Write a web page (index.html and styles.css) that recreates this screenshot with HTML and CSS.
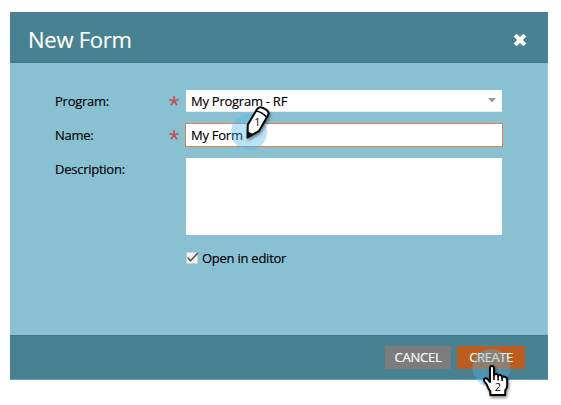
FILE: index.html
```
<!DOCTYPE html>
<html lang="en">
<head>
<meta charset="utf-8">
<title>New Form</title>
<link rel="stylesheet" href="styles.css">
</head>
<body>
<section class="dialog">
  <header class="dialog-header">
    <h1>New Form</h1>
    <svg class="close" viewBox="0 0 14 14"><path d="M2.8 2.8 11.2 11.2M11.2 2.8 2.8 11.2"/></svg>
  </header>
  <div class="dialog-body">
    <div class="row">
      <span class="label">Program:</span>
      <svg class="star" viewBox="0 0 12 12"><path d="M6 6V1M6 6 1.2 4.5M6 6 10.8 4.5M6 6 3 10.2M6 6 9 10.2"/></svg>
      <div class="field select"><span class="value">My Program - RF</span><svg class="arrow" viewBox="0 0 8 5"><path d="M0 0H8L4 4.5Z"/></svg></div>
    </div>
    <div class="row row-name">
      <span class="label">Name:</span>
      <svg class="star" viewBox="0 0 12 12"><path d="M6 6V1M6 6 1.2 4.5M6 6 10.8 4.5M6 6 3 10.2M6 6 9 10.2"/></svg>
      <div class="field focused"><span class="value">My Form</span></div>
    </div>
    <div class="row row-description">
      <span class="label">Description:</span>
      <div class="field area"></div>
    </div>
    <div class="check-row">
      <svg class="checkbox" viewBox="0 0 13 13"><rect x=".5" y=".5" width="11" height="11"/><path d="M1.6 5.5 4.5 8.7 12 .8"/></svg>
      <span class="check-label">Open in editor</span>
    </div>
  </div>
  <footer class="dialog-footer">
    <div class="button cancel"><span>CANCEL</span></div>
    <div class="button create"><span>CREATE</span></div>
  </footer>
</section>
<svg class="marker pencil" viewBox="228 98 52 56">
  <circle class="halo" cx="249" cy="132" r="18"/>
  <g class="shape">
    <path class="outline" d="M247.5 137.5 247.8 124.8 257 109.3Q258.8 106.2 262.5 107.7L266.8 110.2Q269.5 112.3 268 115.3L258.8 131.2Z"/>
    <path class="detail" d="M256 111.3Q260.5 111 267 117.4"/>
    <path class="tip" d="M247 138.2 247.3 131 253.6 134.4Z"/>
  </g>
  <text x="257.3" y="125.5">1</text>
</svg>
<svg class="marker hand" viewBox="468 344 52 56">
  <circle class="halo" cx="491.5" cy="368" r="19"/>
  <g class="shape">
    <path class="outline" d="M490 382V368Q490 366 492 366T494 368V375.2Q494.4 373.8 496.2 373.9 498 374 498.1 376 498.7 374.8 500.2 375.1 502 375.4 502.1 377.2 503 376.3 504.5 376.8 507.2 377.3 507.2 380V385.5Q507.2 388 505.2 390.3V395H490.3V391.3Q488 388.5 486.8 384.5L484.5 381.5Q483.2 379.8 484.5 378.7 486 377.7 487.7 379.2Z"/>
    <path class="detail" d="M494 374.5V380M498.1 376V380.5M502.1 377V381"/>
  </g>
  <text x="497.8" y="391">2</text>
</svg>
</body>
</html>
```
FILE: styles.css
```
body {
  margin: 0;
  padding: 12px 13px 0 10px;
  background: #fff;
  color: #000;
  font: 13px/18px "Open Sans", "Noto Sans", sans-serif;
  letter-spacing: -.25px;
  -webkit-text-stroke: .15px currentColor;
}
.dialog {
  height: 368px;
  display: flex;
  flex-direction: column;
  background: #89c1d3;
}
.dialog-header {
  box-sizing: border-box;
  height: 51px;
  padding: 4px 20px 0 18px;
  display: flex;
  align-items: center;
  justify-content: space-between;
  background: #478192;
  border-bottom: 1px solid #407889;
}
h1 {
  margin: 0;
  color: #fff;
  font-size: 22px;
  line-height: 30px;
  font-weight: 400;
}
.close { width: 16px; height: 16px; margin-top: 1px; fill: none; stroke: #fff; stroke-width: 3.6; }
.dialog-body {
  box-sizing: border-box;
  height: 272px;
  padding: 27px 44px 0 45px;
  border-right: 1px solid #91cce0;
}
.row { display: flex; align-items: center; height: 22px; }
.row-name { margin-top: 11px; height: 24px; }
.row-description { margin-top: 11px; height: 77px; align-items: flex-start; }
.label { width: 113px; white-space: nowrap; }
.star { width: 12px; height: 12px; margin-right: 6px; fill: none; stroke: #c4514e; stroke-width: 1.7; }
.field { flex: none; box-sizing: border-box; height: 22px; width: 316px; background: #fff; display: flex; align-items: center; padding: 0 6px 0 5px; }
.select { justify-content: space-between; border-bottom: 1px solid #e2eef2; }
.arrow { width: 8px; height: 5px; fill: #999; }
.focused { width: 318px; height: 24px; margin-left: -1px; border: 1px solid #df814b; padding-left: 5px; }
.area { margin-left: 18px; height: 77px; }
.row-description .label { padding-top: 2px; }
.check-row { display: flex; align-items: center; height: 18px; margin: 14px 0 0 131px; }
.checkbox { width: 13px; height: 13px; margin-right: 3px; }
.checkbox rect { fill: #f5f5f5; stroke: #ccc; }
.checkbox path { fill: none; stroke: #565656; stroke-width: 1.6; }
.dialog-footer {
  box-sizing: border-box;
  height: 45px;
  padding: 10px 23px 0;
  display: flex;
  justify-content: flex-end;
  gap: 6px;
  background: #478192;
  border-top: 1px solid #407889;
  border-bottom: 1px solid #6c9fb4;
}
.button { width: 66px; height: 23px; line-height: 22px; text-align: center; color: #fff; background: #7c7c7c; }
.create { width: 68px; background: #bc5d20; letter-spacing: -.45px; }
.marker { position: absolute; width: 52px; height: 56px; }
.pencil { left: 228px; top: 98px; }
.hand { left: 468px; top: 344px; }
.halo { fill: #4cb6e9; opacity: .38; }
.shape { filter: drop-shadow(1px 2px 1.5px rgba(0, 0, 0, .45)); }
.outline { fill: #fff; stroke: #080808; stroke-width: 2; stroke-linejoin: round; }
.detail { fill: none; stroke: #080808; stroke-width: 1.6; }
.tip { fill: #080808; }
.marker text { font: 11px "Open Sans", sans-serif; text-anchor: middle; fill: #080808; }
```
